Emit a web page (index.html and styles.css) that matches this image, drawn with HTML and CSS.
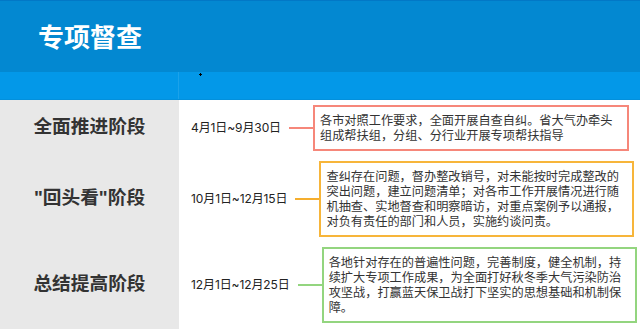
FILE: index.html
```html
<!DOCTYPE html>
<html lang="zh-CN">
<head>
<meta charset="utf-8">
<title>专项督查</title>
<link rel="stylesheet" href="styles.css">
</head>
<body>
<header class="top">
  <h1 class="title">专项督查</h1>
</header>
<div class="subbar">
  <div class="subbar-left"></div>
  <div class="subbar-right"><span class="cursor"></span></div>
</div>
<main class="stages">
  <section class="stage stage-red">
    <div class="label">全面推进阶段</div>
    <div class="date">4月1日~9月30日</div>
    <div class="link"></div>
    <div class="box">各市对照工作要求，全面开展自查自纠。省大气办牵头组成帮扶组，分组、分行业开展专项帮扶指导</div>
  </section>
  <section class="stage stage-orange">
    <div class="label">"回头看"阶段</div>
    <div class="date">10月1日~12月15日</div>
    <div class="link"></div>
    <div class="box">查纠存在问题，督办整改销号，对未能按时完成整改的突出问题，建立问题清单；对各市工作开展情况进行随机抽查、实地督查和明察暗访，对重点案例予以通报，对负有责任的部门和人员，实施约谈问责。</div>
  </section>
  <section class="stage stage-green">
    <div class="label">总结提高阶段</div>
    <div class="date">12月1日~12月25日</div>
    <div class="link"></div>
    <div class="box">各地针对存在的普遍性问题，完善制度，健全机制，持续扩大专项工作成果，为全面打好秋冬季大气污染防治攻坚战，打赢蓝天保卫战打下坚实的思想基础和机制保障。</div>
  </section>
</main>
</body>
</html>
```

FILE: styles.css
```css
* { box-sizing: border-box; }
html, body { margin: 0; padding: 0; }
body {
  width: 640px;
  height: 329px;
  overflow: hidden;
  background: #fff;
  font-family: "Noto Sans CJK SC", "Noto Sans", sans-serif;
  color: #333;
}
.top {
  height: 72px;
  background: #0388d1;
  border-top: 1px solid #0278c6;
  display: flex;
  align-items: center;
  padding-left: 38px;
}
.title {
  margin: 0;
  color: #fff;
  font-size: 26px;
  font-weight: 700;
  line-height: 1;
  padding-bottom: 1px;
}
.subbar {
  height: 28px;
  display: flex;
  background: #0398e8;
  border-bottom: 1px solid #0390dc;
}
.subbar-left {
  width: 179px;
  border-right: 1px solid #1ba2ea;
}
.subbar-right {
  flex: 1;
  position: relative;
}
.cursor {
  position: absolute;
  left: 20px;
  top: 1px;
  width: 3px;
  height: 3px;
  background:
    linear-gradient(#000, #000) center / 3px 1px no-repeat,
    linear-gradient(#000, #000) center / 1px 3px no-repeat;
}
.stages {
  height: 229px;
  padding-top: 5px;
  display: flex;
  flex-direction: column;
  gap: 10px;
  background: linear-gradient(to right, #e8e8e8 179px, #fff 179px);
}
.stage {
  display: flex;
  align-items: center;
}
.label {
  width: 179px;
  flex: none;
  text-align: center;
  font-family: "Liberation Sans", "Noto Sans CJK SC", sans-serif;
  font-size: 18.7px;
  font-weight: 700;
  color: #333;
  line-height: 1;
  padding-bottom: 1px;
}
.date {
  margin-left: 12px;
  font-family: Inter, "Noto Sans CJK SC", sans-serif;
  font-size: 12px;
  letter-spacing: -0.1px;
  color: #222;
  white-space: nowrap;
  line-height: 1;
}
.link {
  margin-left: 8px;
  width: 24px;
  height: 1.5px;
  flex: none;
}
.box {
  width: 316px;
  flex: none;
  border: 2px solid;
  padding: 6px 10px 6px 5px;
  font-size: 12.2px;
  line-height: 15px;
  color: #333;
}
.stage-red .link { background: #f6877a; }
.stage-red .box { border-color: #f6877a; }
.stage-orange .link { background: #f5ae2e; }
.stage-orange .box { border-color: #f7b53a; }
.stage-green .link { background: #93d57f; }
.stage-green .box { border-color: #93d57f; }
.stage-orange .box, .stage-green .box { width: 315px; }
```
